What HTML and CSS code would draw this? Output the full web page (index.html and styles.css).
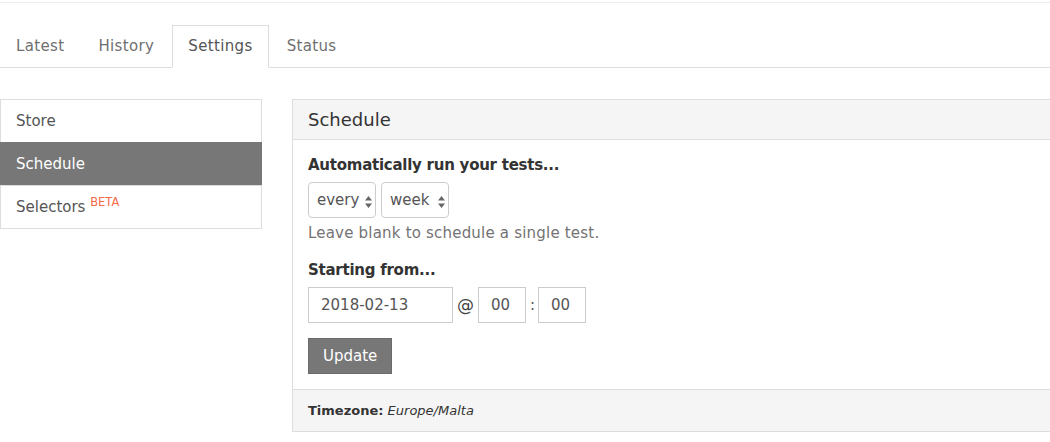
FILE: index.html
```html
<!DOCTYPE html>
<html lang="en">
<head>
<meta charset="utf-8">
<title>Settings - Schedule</title>
<link rel="stylesheet" href="styles.css">
</head>
<body>
<div class="topbar"></div>
<ul class="tabs">
  <li class="tab"><a href="#">Latest</a></li>
  <li class="tab"><a href="#">History</a></li>
  <li class="tab active"><a href="#">Settings</a></li>
  <li class="tab"><a href="#">Status</a></li>
</ul>
<div class="layout">
  <div class="side">
    <a class="side-item" href="#">Store</a>
    <a class="side-item active" href="#">Schedule</a>
    <a class="side-item" href="#">Selectors <sup class="beta">BETA</sup></a>
  </div>
  <div class="panel">
    <div class="panel-head"><h3 class="panel-title">Schedule</h3></div>
    <div class="panel-body">
      <div class="label">Automatically run your tests...</div>
      <div class="selects">
        <div class="sel sel-every">
          <select><option>every</option></select>
          <svg class="arrows" width="7" height="12" viewBox="0 0 7 12"><path d="M3.5 0 L7 4.5 L0 4.5 Z M3.5 12 L7 7.5 L0 7.5 Z" fill="#666"/></svg>
        </div>
        <div class="sel sel-week">
          <select><option>week</option></select>
          <svg class="arrows" width="7" height="12" viewBox="0 0 7 12"><path d="M3.5 0 L7 4.5 L0 4.5 Z M3.5 12 L7 7.5 L0 7.5 Z" fill="#666"/></svg>
        </div>
      </div>
      <p class="help">Leave blank to schedule a single test.</p>
      <div class="label">Starting from...</div>
      <div class="time-row">
        <input class="inp inp-date" type="text" value="2018-02-13">
        <span class="sep at">@</span>
        <input class="inp inp-time" type="text" value="00">
        <span class="sep colon">:</span>
        <input class="inp inp-time" type="text" value="00">
      </div>
      <button class="btn" type="button">Update</button>
    </div>
    <div class="panel-foot"><b>Timezone:</b> <i>Europe/Malta</i></div>
  </div>
</div>
</body>
</html>
```
FILE: styles.css
```css
html, body {
  margin: 0;
  padding: 0;
  overflow: hidden;
  background: #fff;
}
body {
  font-family: "DejaVu Sans", "Noto Sans", sans-serif;
  font-size: 15px;
  line-height: 21px;
  color: #333;
  width: 1050px;
}
a { text-decoration: none; }

.topbar {
  height: 2px;
  border-bottom: 1px solid #eeeeee;
}

.tabs {
  list-style: none;
  margin: 22px 0 0 0;
  padding: 0;
  display: flex;
  border-bottom: 1px solid #dddddd;
}
.tab {
  margin-right: 2px;
  margin-bottom: -1px;
}
.tab a {
  display: block;
  padding: 10px 15px;
  line-height: 21px;
  letter-spacing: 0.35px;
  border: 1px solid transparent;
  color: #6f6f6f;
}
.tab.active a {
  border-color: #dddddd;
  border-bottom-color: #fff;
  background: #fff;
  color: #555;
}

.layout {
  display: grid;
  grid-template-columns: 262px 830px;
  column-gap: 30px;
  margin-top: 31px;
  align-items: start;
}

.side {
  display: flex;
  flex-direction: column;
}
.side-item {
  display: block;
  padding: 10px 15px;
  line-height: 22px;
  border: 1px solid #dddddd;
  margin-bottom: -1px;
  color: #555;
}
.side-item.active {
  background: #777777;
  border-color: #777777;
  color: #fff;
}
.beta {
  color: #f36a45;
  font-size: 11.5px;
  line-height: 0;
  vertical-align: 6px;
}

.panel {
  border: 1px solid #dddddd;
  background: #fff;
}
.panel-head {
  background: #f5f5f5;
  border-bottom: 1px solid #dddddd;
  padding: 10px 15px;
}
.panel-title {
  margin: 0;
  font-size: 18px;
  line-height: 19px;
  font-weight: normal;
  color: #333;
}
.panel-body {
  padding: 15px;
}
.label {
  font-weight: bold;
  letter-spacing: -0.25px;
  color: #333;
  margin-bottom: 6px;
}
.selects {
  display: flex;
  gap: 5px;
}
.sel {
  position: relative;
  height: 36px;
}
.sel select {
  appearance: none;
  -webkit-appearance: none;
  box-sizing: border-box;
  height: 36px;
  border: 1px solid #cccccc;
  border-radius: 4px;
  background: #fff;
  font-family: inherit;
  font-size: 15px;
  color: #555;
  padding: 0 10px 0 8px;
  margin: 0;
}
.sel-every select { width: 68px; }
.sel-week select { width: 68px; }
.arrows {
  position: absolute;
  right: 4px;
  top: 14px;
  pointer-events: none;
}
.help {
  margin: 5px 0 16px 0;
  color: #737373;
  letter-spacing: 0.2px;
}
.time-row {
  display: flex;
  align-items: center;
}
.inp {
  box-sizing: border-box;
  height: 36px;
  border: 1px solid #cccccc;
  border-radius: 0;
  font-family: inherit;
  font-size: 15px;
  color: #555;
  padding: 0 0 0 12px;
  margin: 0;
  background: #fff;
}
.inp-date { width: 145px; }
.inp-time { width: 48px; }
.sep { color: #555; }
.at {
  margin: 0 4px 0 4px;
  font-size: 17px;
  color: #444;
}
.colon { margin: 0 3px 0 4px; }

.btn {
  margin-top: 15px;
  display: block;
  height: 36px;
  box-sizing: border-box;
  padding: 0 14px;
  background: #777777;
  border: 1px solid #6a6a6a;
  border-radius: 0;
  color: #fff;
  font-family: inherit;
  font-size: 15px;
}

.panel-foot {
  background: #f5f5f5;
  border-top: 1px solid #dddddd;
  padding: 10px 15px;
  font-size: 13px;
  line-height: 21px;
  color: #333;
}
```
